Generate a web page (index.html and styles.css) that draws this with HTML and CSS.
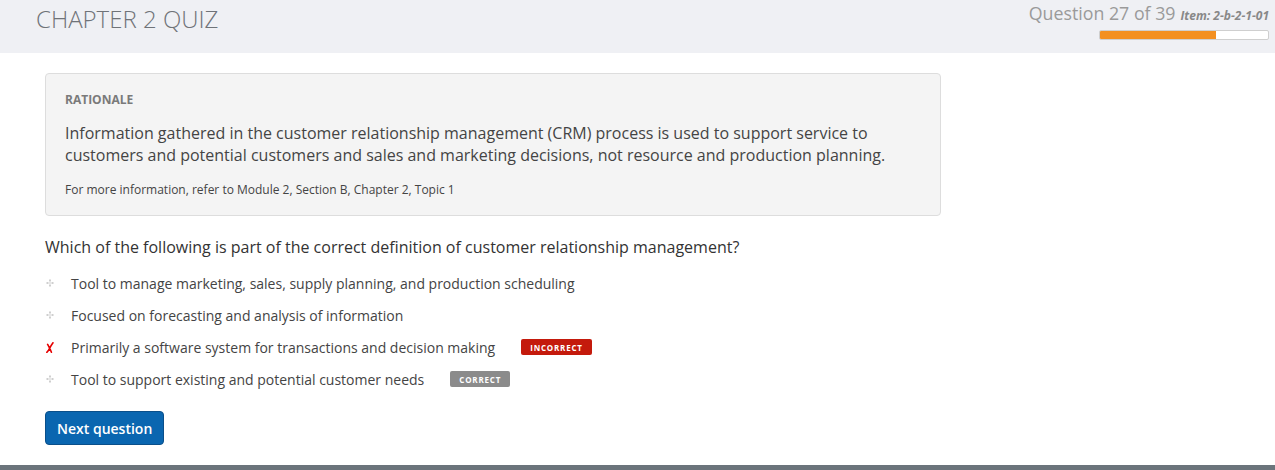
FILE: index.html
```html
<!DOCTYPE html>
<html lang="en">
<head>
<meta charset="utf-8">
<title>Chapter 2 Quiz</title>
<link rel="stylesheet" href="styles.css">
</head>
<body>
<div class="page">
  <header class="top">
    <h1 class="title">CHAPTER 2 QUIZ</h1>
    <div class="status">
      <div class="status-line">
        <span class="qcount">Question 27 of 39</span>
        <span class="item">Item: 2-b-2-1-01</span>
      </div>
      <div class="progress"><div class="progress-fill" style="width:69.2%"></div></div>
    </div>
  </header>
  <main class="content">
    <section class="rationale">
      <div class="rationale-label">RATIONALE</div>
      <p class="rationale-text">Information gathered in the customer relationship management (CRM) process is used to support service to customers and potential customers and sales and marketing decisions, not resource and production planning.</p>
      <p class="rationale-ref">For more information, refer to Module 2, Section B, Chapter 2, Topic 1</p>
    </section>
    <p class="question">Which of the following is part of the correct definition of customer relationship management?</p>
    <ul class="options">
      <li class="option">
        <span class="mark"><svg width="8" height="8" viewBox="0 0 8 8"><rect x="3" y="0.5" width="2" height="2" fill="#cfcfcf"/><rect x="0.5" y="3" width="2" height="2" fill="#cfcfcf"/><rect x="5.5" y="3" width="2" height="2" fill="#cfcfcf"/><rect x="3" y="5.5" width="2" height="2" fill="#cfcfcf"/><rect x="3" y="3" width="2" height="2" fill="#e8e8e8"/></svg></span>
        <span class="opt-text">Tool to manage marketing, sales, supply planning, and production scheduling</span>
      </li>
      <li class="option">
        <span class="mark"><svg width="8" height="8" viewBox="0 0 8 8"><rect x="3" y="0.5" width="2" height="2" fill="#cfcfcf"/><rect x="0.5" y="3" width="2" height="2" fill="#cfcfcf"/><rect x="5.5" y="3" width="2" height="2" fill="#cfcfcf"/><rect x="3" y="5.5" width="2" height="2" fill="#cfcfcf"/><rect x="3" y="3" width="2" height="2" fill="#e8e8e8"/></svg></span>
        <span class="opt-text">Focused on forecasting and analysis of information</span>
      </li>
      <li class="option">
        <span class="mark"><svg width="8" height="11" viewBox="0 0 8 11"><path d="M7 0.8 C5.4 3 4.3 5 3.6 6.3 C2.8 8 1.8 9.4 0.8 10.3 M1.6 2.4 C2.8 4.6 4.2 7 5.4 10.2" fill="none" stroke="#e60000" stroke-width="1.6" stroke-linecap="round"/></svg></span>
        <span class="opt-text">Primarily a software system for transactions and decision making</span>
        <span class="badge badge-incorrect">INCORRECT</span>
      </li>
      <li class="option">
        <span class="mark"><svg width="8" height="8" viewBox="0 0 8 8"><rect x="3" y="0.5" width="2" height="2" fill="#cfcfcf"/><rect x="0.5" y="3" width="2" height="2" fill="#cfcfcf"/><rect x="5.5" y="3" width="2" height="2" fill="#cfcfcf"/><rect x="3" y="5.5" width="2" height="2" fill="#cfcfcf"/><rect x="3" y="3" width="2" height="2" fill="#e8e8e8"/></svg></span>
        <span class="opt-text">Tool to support existing and potential customer needs</span>
        <span class="badge badge-correct">CORRECT</span>
      </li>
    </ul>
    <button class="next-btn" type="button">Next question</button>
  </main>
  <footer class="bottom-bar"></footer>
</div>
</body>
</html>
```

FILE: styles.css
```css
* { box-sizing: border-box; }
html, body { margin: 0; padding: 0; }
body {
  font-family: "Open Sans", "Liberation Sans", Arial, sans-serif;
  background: #ffffff;
  color: #333;
}
.page {
  display: flex;
  flex-direction: column;
  height: 470px;
}
.top {
  height: 53px;
  background: #eff0f4;
  display: flex;
  justify-content: space-between;
  align-items: flex-start;
  padding: 0 6px 0 36px;
  flex-shrink: 0;
}
.title {
  margin: 0;
  padding-top: 3px;
  font-size: 24px;
  line-height: 32px;
  font-weight: 300;
  color: #6f7378;
  letter-spacing: 0;
}
.status {
  display: flex;
  flex-direction: column;
  align-items: flex-end;
  padding-top: 1px;
}
.status-line {
  display: flex;
  align-items: baseline;
  gap: 5px;
}
.qcount {
  font-size: 17.8px;
  line-height: 24px;
  color: #9a9a9a;
  font-weight: 400;
}
.item {
  font-size: 12px;
  font-weight: 700;
  font-style: italic;
  color: #888;
}
.progress {
  margin-top: 5px;
  width: 170px;
  height: 10px;
  background: #fff;
  border: 1px solid #cfcfcf;
  border-radius: 2px;
  overflow: hidden;
}
.progress-fill {
  height: 100%;
  background: #f39021;
}
.content {
  padding: 20px 0 0 45px;
  flex: 1;
}
.rationale {
  width: 896px;
  background: #f4f4f4;
  border: 1px solid #dddddd;
  border-radius: 4px;
  padding: 17px 20px 17px 19px;
}
.rationale-label {
  font-size: 12px;
  line-height: 17px;
  font-weight: 700;
  color: #7a7a7a;
}
.rationale-text {
  margin: 14px 0 0;
  font-size: 16px;
  line-height: 22px;
  color: #444;
}
.rationale-ref {
  margin: 15px 0 0;
  font-size: 12px;
  line-height: 17px;
  color: #444;
}
.question {
  margin: 20px 0 0;
  font-size: 16px;
  line-height: 22px;
  color: #333;
}
.options {
  list-style: none;
  margin: 9px 0 0;
  padding: 0;
}
.option {
  display: flex;
  align-items: center;
  height: 32px;
  font-size: 14px;
  color: #444;
}
.mark {
  width: 26px;
  display: flex;
  align-items: center;
  padding-left: 1px;
}
.mark svg { display: block; }
.badge {
  margin-left: 26px;
  height: 16px;
  padding: 0 9px;
  display: inline-flex;
  align-items: center;
  font-size: 8px;
  font-weight: 700;
  letter-spacing: 0.8px;
  color: #fff;
  border-radius: 2px;
}
.badge-incorrect { background: #c41a0c; }
.badge-correct { background: #8b8b8b; }
.next-btn {
  margin-top: 16px;
  height: 34px;
  padding: 0 11px;
  background: #0a66b0;
  border: 1px solid #0a4f8a;
  border-radius: 4px;
  color: #fff;
  font-family: "Open Sans", "Liberation Sans", Arial, sans-serif;
  font-size: 14px;
  font-weight: 600;
  cursor: pointer;
}
.bottom-bar {
  height: 5px;
  background: #6b747b;
  flex-shrink: 0;
}
```
